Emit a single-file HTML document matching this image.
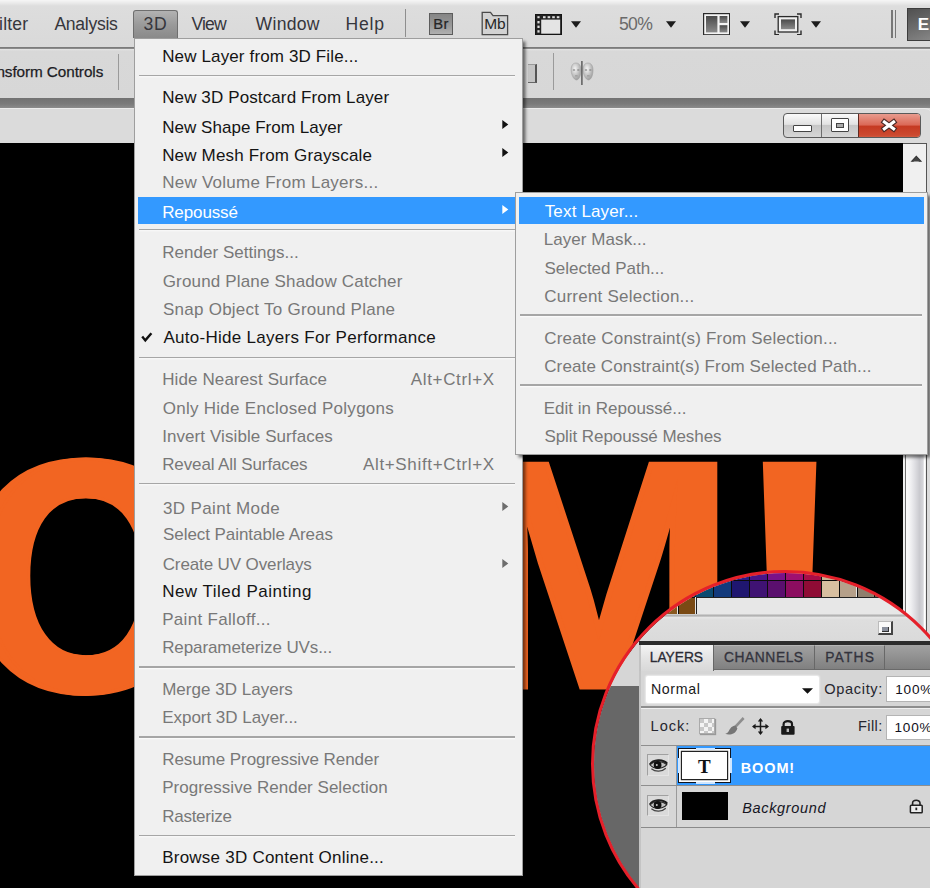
<!DOCTYPE html>
<html><head><meta charset="utf-8"><title>3D menu</title>
<style>
html,body{margin:0;padding:0}
body{width:930px;height:888px;overflow:hidden;position:relative;background:#dedede;font-family:"Liberation Sans",sans-serif}
div,span,svg{position:absolute;box-sizing:border-box}
.t{white-space:nowrap;line-height:1;display:block}
.hr{height:1.35px;background:#a6a6a6;box-shadow:0 1.3px 0 #fafafa}
.a{overflow:visible}
#topbar{left:0;top:0;width:930px;height:47px;background:linear-gradient(#f6f6f6 0,#eaeaea 3px,#dddddd 6px,#d9d9d9 100%)}
#topline{left:0;top:46.6px;width:930px;height:2.4px;background:linear-gradient(#8a8a8a,#6c6c6c 50%,#a8a8a8)}
#optbar{left:0;top:49px;width:930px;height:50px;background:linear-gradient(#e6e6e6 0,#d8d8d8 2px,#d7d7d7 100%)}
#band{left:0;top:98.4px;width:930px;height:10px;background:linear-gradient(#727272,#7b7b7b 60%,#8c8c8c)}
#docwin{left:-20px;top:108px;width:952px;height:800px;background:#dbdbdb;border-radius:0 7px 0 0;border-top:1px solid #ececec}
#canvas{left:0;top:142.5px;width:903px;height:760px;background:#000}
#sbar{left:903px;top:142.5px;width:24px;height:760px;background:#f0f0f0;border-right:1.3px solid #555;border-top:1px solid #555}
#thumb{left:904.6px;top:440px;width:20.6px;height:470px;border-left:1px solid #707070;background:linear-gradient(90deg,#fbfbfb 0,#f0f0f2 25%,#e0e0e4 45%,#c9c9ce 72%,#d6d6da 90%,#ffffff 97%)}
.vsep{width:1.3px;background:#8e8e8e}
#btn3d{left:133px;top:10px;width:44.6px;height:27.5px;border:1px solid #6e6e6e;border-bottom:none;border-radius:3px 3px 0 0;background:linear-gradient(#b2b2b2,#9a9a9a 50%,#8a8a8a)}
.menu{background:#f0f0f0;border:1px solid #9e9e9e;box-shadow:2.5px 2.5px 3px rgba(0,0,0,.55)}
.hl{background:#3399ff}
#boom span{font-weight:bold;color:#f26522;line-height:1;white-space:nowrap;transform-origin:0 0;display:block}
</style></head><body>

<div id="topbar"></div><div id="topline"></div><div id="optbar"></div><div id="band"></div>
<div id="docwin"></div>
<div id="canvas"></div><div id="sbar"></div><div id="thumb"></div>
<svg style="left:910px;top:154.5px" width="13" height="8" viewBox="0 0 13 8"><path d="M0.5 6.8 L6.3 0.6 L12.2 6.8 L9.4 6.8 L6.3 4.8 L3.2 6.8 Z" fill="#333"/><path d="M1.8 6.5 L6.3 1.8 L10.8 6.5 Z" fill="#444"/></svg>

<!-- BOOM artwork (real text glyphs) -->
<div id="boom" style="left:0;top:0;width:903px;height:888px;overflow:hidden">
<svg style="left:0;top:0" width="903" height="888" viewBox="0 0 903 888"><g font-family="Liberation Sans" font-weight="bold" font-size="330" fill="#f26522" stroke="#f26522" stroke-linejoin="miter" stroke-miterlimit="10"><text transform="translate(-39.45,691.16) scale(0.9789,1.0076)" stroke-width="3">O</text><text transform="translate(-23.40,691.16) scale(0.8536,1.0076)" stroke-width="3">O</text><text transform="translate(214.55,691.16) scale(0.9789,1.0076)" stroke-width="3">O</text><text transform="translate(230.60,691.16) scale(0.8536,1.0076)" stroke-width="3">O</text><text transform="translate(460.66,686.81) scale(1.0042,0.9798)" stroke-width="5.5">M</text><text transform="translate(730.19,688.51) scale(1.0847,0.9948)" stroke-width="2">!</text></g></svg>
</div>

<!-- top bar widgets -->
<div id="btn3d"></div>
<div class="vsep" style="left:404.5px;top:9px;height:28px"></div>
<div class="vsep" style="left:118px;top:54px;height:36px;background:#9a9a9a"></div>
<div class="vsep" style="left:553px;top:53px;height:37px;background:#9a9a9a"></div>
<div class="vsep" style="left:891.3px;top:10px;height:28px;background:#777"></div>
<div class="vsep" style="left:895.2px;top:10px;height:28px;background:#777"></div>
<!-- Br -->
<div style="left:429.4px;top:13px;width:23.6px;height:21.6px;border:1px solid #5c5c5c;background:linear-gradient(#858585,#9a9a9a 60%,#b0b0b0)"></div>
<!-- Mb -->
<svg style="left:481px;top:10.5px" width="28" height="25" viewBox="0 0 28 25"><path d="M1.2 23.6 L1.2 1.4 L9.5 1.4 L12 4.6 L26.6 4.6 L26.6 23.6 Z" fill="#d2d2d2" stroke="#4a4a4a" stroke-width="1.3"/></svg>
<!-- film -->
<svg style="left:535px;top:13.5px" width="27" height="21.5" viewBox="0 0 27 21.5"><rect x="0.9" y="0.9" width="25.2" height="19.7" fill="#e4e4e4" stroke="#151515" stroke-width="1.8"/><rect x="1" y="1" width="5.2" height="19.5" fill="#222"/><rect x="1" y="1" width="25" height="4.6" fill="#222"/><g fill="#ddd"><rect x="2.4" y="2.2" width="2.2" height="2"/><rect x="2.4" y="7" width="2.2" height="2.4"/><rect x="2.4" y="11.6" width="2.2" height="2.4"/><rect x="2.4" y="16.2" width="2.2" height="2.4"/><rect x="8" y="2.2" width="2.6" height="2"/><rect x="12.6" y="2.2" width="2.6" height="2"/><rect x="17.2" y="2.2" width="2.6" height="2"/><rect x="21.8" y="2.2" width="2.6" height="2"/></g></svg>
<!-- arrange -->
<svg style="left:703.3px;top:12.8px" width="27.2" height="22.4" viewBox="0 0 27.2 22.4"><defs><linearGradient id="g1" x1="0" y1="0" x2="0" y2="1"><stop offset="0" stop-color="#4a4a4a"/><stop offset="1" stop-color="#8a8a8a"/></linearGradient></defs><rect x="0.6" y="0.6" width="26" height="21.2" fill="#f4f4f4" stroke="#2a2a2a" stroke-width="1.2"/><rect x="3" y="3" width="11.4" height="16.4" fill="url(#g1)"/><rect x="16.6" y="3" width="7.8" height="7" fill="url(#g1)"/><rect x="16.6" y="12.2" width="7.8" height="7.2" fill="url(#g1)"/></svg>
<!-- screen mode -->
<svg style="left:774.4px;top:12.8px" width="28" height="22.6" viewBox="0 0 28 22.6"><path d="M1 5 V1 H5 M23 1 H27 V5 M27 17.6 V21.6 H23 M5 21.6 H1 V17.6" fill="none" stroke="#2a2a2a" stroke-width="1.4"/><rect x="4.2" y="3.6" width="19.6" height="15.4" fill="#f0f0f0" stroke="#2a2a2a" stroke-width="1.3"/><rect x="7" y="6.4" width="14" height="9.8" fill="url(#g1)"/></svg>
<svg class="a" style="left:571.3px;top:21px" width="10" height="7" viewBox="0 0 10 7"><path d="M0 0.3 L10 0.3 L5 6.8 Z" fill="#1c1c1c"/></svg><svg class="a" style="left:665.8px;top:21px" width="10" height="7" viewBox="0 0 10 7"><path d="M0 0.3 L10 0.3 L5 6.8 Z" fill="#1c1c1c"/></svg><svg class="a" style="left:739.5px;top:21px" width="10" height="7" viewBox="0 0 10 7"><path d="M0 0.3 L10 0.3 L5 6.8 Z" fill="#1c1c1c"/></svg><svg class="a" style="left:811.3px;top:21px" width="10" height="7" viewBox="0 0 10 7"><path d="M0 0.3 L10 0.3 L5 6.8 Z" fill="#1c1c1c"/></svg>
<!-- E button -->
<div style="left:906.5px;top:7.5px;width:40px;height:33.5px;border:1.3px solid #3c3c3c;background:linear-gradient(160deg,#505050,#6e6e6e 50%,#8e8e8e)"></div>
<!-- options bar small icon + faces -->
<div style="left:527.5px;top:64px;width:9.5px;height:18.5px;background:#c4c4c4;border-right:2px solid #555;border-bottom:1.5px solid #666;border-top:1px solid #999"></div>
<svg style="left:570px;top:60px" width="26" height="26" viewBox="0 0 26 26"><defs><radialGradient id="fg" cx="0.4" cy="0.35" r="0.7"><stop offset="0" stop-color="#f4f4f4"/><stop offset="1" stop-color="#9a9a9a"/></radialGradient></defs><path d="M6 3 C2 3 0.8 7 1.2 11 C1.6 15 3.5 19.5 6.5 20 C9.5 19.5 10.8 15 11 11 C11.2 7 10 3 6 3Z" fill="url(#fg)" stroke="#a2a2a2" stroke-width="0.6"/><path d="M18 3 C14 3 12.8 7 13.2 11 C13.6 15 15.5 19.5 18.5 20 C21.5 19.5 22.8 15 23 11 C23.2 7 22 3 18 3Z" fill="url(#fg)" stroke="#a2a2a2" stroke-width="0.6"/><g fill="#8a8a8a"><ellipse cx="4" cy="10" rx="1.3" ry="0.8"/><ellipse cx="8.3" cy="10" rx="1.3" ry="0.8"/><ellipse cx="16" cy="10" rx="1.3" ry="0.8"/><ellipse cx="20.3" cy="10" rx="1.3" ry="0.8"/><rect x="5" y="15.5" width="2.6" height="0.8"/><rect x="17" y="15.5" width="2.6" height="0.8"/></g><rect x="11.2" y="1" width="1.4" height="24" fill="#555"/></svg>

<!-- window buttons -->
<div style="left:783px;top:112.5px;width:138px;height:25.5px;border-radius:4px;border:1px solid #5a5a5a;background:linear-gradient(#fafafa,#e2e2e2 45%,#c6c6c6 50%,#d6d6d6);overflow:hidden">
 <div style="left:36.5px;top:0;width:1.2px;height:26px;background:#6e6e6e"></div>
 <div style="left:73.5px;top:-1px;width:64px;height:26px;border-left:1.2px solid #5e2a22;background:linear-gradient(#e9a093 0,#db6a58 45%,#c53a22 52%,#cc4a30 85%,#d86a50)"></div>
 <div style="left:9px;top:11px;width:18.5px;height:7px;background:#fff;border:1.2px solid #444;border-radius:1px"></div>
 <div style="left:46.5px;top:4.6px;width:18px;height:14.4px;background:#fff;border:1.2px solid #444;border-radius:1px"></div>
 <div style="left:51.5px;top:9.4px;width:8px;height:4.8px;background:#aaa;border:1.1px solid #444"></div>
 <svg style="left:95.5px;top:4px" width="19" height="16" viewBox="0 0 19 16"><path d="M4.4 4 L13.6 10.8 M13.6 4 L4.4 10.8" stroke="#4a2a26" stroke-width="5.4" stroke-linecap="square"/><path d="M4.4 4 L13.6 10.8 M13.6 4 L4.4 10.8" stroke="#fff" stroke-width="3.2" stroke-linecap="square"/></svg>
</div>

<span class="t" style="left:54.4px;top:16.30px;font-size:17.6px;color:#36363c;letter-spacing:-0.295px;">Analysis</span>
<span class="t" style="left:143.45px;top:16.30px;font-size:17.6px;color:#36363c;letter-spacing:0.67px;">3D</span>
<span class="t" style="left:191.4px;top:16.30px;font-size:17.6px;color:#36363c;letter-spacing:-0.81px;">View</span>
<span class="t" style="left:255.6px;top:16.30px;font-size:17.6px;color:#36363c;letter-spacing:0.262px;">Window</span>
<span class="t" style="left:345.62px;top:16.30px;font-size:17.6px;color:#36363c;letter-spacing:0.735px;">Help</span>
<span class="t" style="left:-11.88px;top:16.30px;font-size:17.6px;color:#36363c;letter-spacing:0.173px;">Filter</span>
<span class="t" style="left:618.95px;top:16.10px;font-size:17.6px;color:#6a6a6a;letter-spacing:-0.62px;">50%</span>
<span class="t" style="left:-25.74px;top:64.05px;font-size:15.3px;color:#1c1c24;letter-spacing:-0.078px;-webkit-text-stroke:0.25px #1c1c24;">Transform Controls</span>
<span class="t" style="left:917.64px;top:16.41px;font-size:17px;color:#ffffff;letter-spacing:0px;font-weight:bold;">E</span>
<span class="t" style="left:433.14px;top:16.87px;font-size:14.8px;color:#262626;letter-spacing:0.432px;-webkit-text-stroke:0.2px #262626;">Br</span>
<span class="t" style="left:484.29px;top:16.48px;font-size:15.5px;color:#262626;letter-spacing:-0.193px;">Mb</span>

<!-- main menu -->
<div class="menu" style="left:133.5px;top:37.5px;width:389px;height:838px"></div>
<div class="hl" style="left:137.5px;top:197.2px;width:377px;height:27px"></div>
<svg style="left:140px;top:330px" width="14" height="14" viewBox="0 0 14 14"><path d="M2.2 6.6 L5.3 10.4 L11.4 3.2" fill="none" stroke="#111" stroke-width="2.4"/></svg>
<span class="t" style="left:162.17px;top:47.61px;font-size:17.0px;color:#141414;letter-spacing:0.139px;">New Layer from 3D File...</span>
<span class="t" style="left:162.17px;top:89.11px;font-size:17.0px;color:#141414;letter-spacing:0.12px;">New 3D Postcard From Layer</span>
<span class="t" style="left:162.17px;top:119.11px;font-size:17.0px;color:#141414;letter-spacing:0.036px;">New Shape From Layer</span>
<span class="t" style="left:162.17px;top:147.31px;font-size:17.0px;color:#141414;letter-spacing:0.177px;">New Mesh From Grayscale</span>
<span class="t" style="left:162.17px;top:173.91px;font-size:17.0px;color:#787878;letter-spacing:0.264px;">New Volume From Layers...</span>
<span class="t" style="left:162.17px;top:204.11px;font-size:17.0px;color:#ffffff;letter-spacing:-0.105px;">Repoussé</span>
<span class="t" style="left:162.17px;top:244.31px;font-size:17.0px;color:#787878;letter-spacing:0.035px;">Render Settings...</span>
<span class="t" style="left:162.7px;top:272.91px;font-size:17.0px;color:#787878;letter-spacing:0.168px;">Ground Plane Shadow Catcher</span>
<span class="t" style="left:162.97px;top:300.91px;font-size:17.0px;color:#787878;letter-spacing:0.252px;">Snap Object To Ground Plane</span>
<span class="t" style="left:163.5px;top:328.91px;font-size:17.0px;color:#141414;letter-spacing:0.277px;">Auto-Hide Layers For Performance</span>
<span class="t" style="left:162.17px;top:371.31px;font-size:17.0px;color:#787878;letter-spacing:0.121px;">Hide Nearest Surface</span>
<span class="t" style="left:162.7px;top:399.61px;font-size:17.0px;color:#787878;letter-spacing:0.276px;">Only Hide Enclosed Polygons</span>
<span class="t" style="left:162.17px;top:427.91px;font-size:17.0px;color:#787878;letter-spacing:0.084px;">Invert Visible Surfaces</span>
<span class="t" style="left:162.17px;top:456.31px;font-size:17.0px;color:#787878;letter-spacing:-0.11px;">Reveal All Surfaces</span>
<span class="t" style="left:162.97px;top:499.61px;font-size:17.0px;color:#787878;letter-spacing:0.356px;">3D Paint Mode</span>
<span class="t" style="left:162.97px;top:526.31px;font-size:17.0px;color:#787878;letter-spacing:-0.054px;">Select Paintable Areas</span>
<span class="t" style="left:162.7px;top:555.61px;font-size:17.0px;color:#787878;letter-spacing:-0.119px;">Create UV Overlays</span>
<span class="t" style="left:162.17px;top:582.91px;font-size:17.0px;color:#141414;letter-spacing:0.493px;">New Tiled Painting</span>
<span class="t" style="left:162.17px;top:610.91px;font-size:17.0px;color:#787878;letter-spacing:0.316px;">Paint Falloff...</span>
<span class="t" style="left:162.17px;top:639.31px;font-size:17.0px;color:#787878;letter-spacing:-0.094px;">Reparameterize UVs...</span>
<span class="t" style="left:162.17px;top:680.91px;font-size:17.0px;color:#787878;letter-spacing:0.019px;">Merge 3D Layers</span>
<span class="t" style="left:162.17px;top:709.31px;font-size:17.0px;color:#787878;letter-spacing:-0.024px;">Export 3D Layer...</span>
<span class="t" style="left:162.17px;top:750.91px;font-size:17.0px;color:#787878;letter-spacing:-0.056px;">Resume Progressive Render</span>
<span class="t" style="left:162.17px;top:779.31px;font-size:17.0px;color:#787878;letter-spacing:0.022px;">Progressive Render Selection</span>
<span class="t" style="left:162.17px;top:807.61px;font-size:17.0px;color:#787878;letter-spacing:-0.248px;">Rasterize</span>
<span class="t" style="left:162.17px;top:849.31px;font-size:17.0px;color:#141414;letter-spacing:0.239px;">Browse 3D Content Online...</span>
<span class="t" style="left:410.7px;top:371.31px;font-size:17.0px;color:#787878;letter-spacing:0.668px;">Alt+Ctrl+X</span>
<span class="t" style="left:363.0px;top:456.31px;font-size:17.0px;color:#787878;letter-spacing:0.651px;">Alt+Shift+Ctrl+X</span>
<div class="hr" style="left:138.5px;width:376.0px;top:74.8px"></div>
<div class="hr" style="left:138.5px;width:376.0px;top:229.0px"></div>
<div class="hr" style="left:138.5px;width:376.0px;top:356.6px"></div>
<div class="hr" style="left:138.5px;width:376.0px;top:482.6px"></div>
<div class="hr" style="left:138.5px;width:376.0px;top:666.3px"></div>
<div class="hr" style="left:138.5px;width:376.0px;top:736.3px"></div>
<div class="hr" style="left:138.5px;width:376.0px;top:834.6px"></div>
<svg class="a" style="left:502.3px;top:119.7px" width="7" height="9" viewBox="0 0 7 9"><path d="M0.3 0 L6.3 4.5 L0.3 9 Z" fill="#111"/></svg><svg class="a" style="left:502.3px;top:148.0px" width="7" height="9" viewBox="0 0 7 9"><path d="M0.3 0 L6.3 4.5 L0.3 9 Z" fill="#111"/></svg><svg class="a" style="left:502.3px;top:204.8px" width="7" height="9" viewBox="0 0 7 9"><path d="M0.3 0 L6.3 4.5 L0.3 9 Z" fill="#fff"/></svg><svg class="a" style="left:502.3px;top:502.3px" width="7" height="9" viewBox="0 0 7 9"><path d="M0.3 0 L6.3 4.5 L0.3 9 Z" fill="#6d6d6d"/></svg><svg class="a" style="left:502.3px;top:558.5px" width="7" height="9" viewBox="0 0 7 9"><path d="M0.3 0 L6.3 4.5 L0.3 9 Z" fill="#6d6d6d"/></svg>

<!-- submenu -->
<div class="menu" style="left:514.7px;top:192.3px;width:413.2px;height:262.3px"></div>
<div class="hl" style="left:518.6px;top:196.6px;width:405.4px;height:27.2px"></div>
<span class="t" style="left:544.73px;top:202.91px;font-size:17.0px;color:#ffffff;letter-spacing:0.154px;">Text Layer...</span>
<span class="t" style="left:543.67px;top:231.31px;font-size:17.0px;color:#787878;letter-spacing:0.069px;">Layer Mask...</span>
<span class="t" style="left:544.47px;top:259.61px;font-size:17.0px;color:#787878;letter-spacing:-0.017px;">Selected Path...</span>
<span class="t" style="left:544.2px;top:287.91px;font-size:17.0px;color:#787878;letter-spacing:0.238px;">Current Selection...</span>
<span class="t" style="left:544.2px;top:329.61px;font-size:17.0px;color:#787878;letter-spacing:0.191px;">Create Constraint(s) From Selection...</span>
<span class="t" style="left:544.2px;top:357.91px;font-size:17.0px;color:#787878;letter-spacing:0.126px;">Create Constraint(s) From Selected Path...</span>
<span class="t" style="left:543.67px;top:399.91px;font-size:17.0px;color:#787878;letter-spacing:0.01px;">Edit in Repoussé...</span>
<span class="t" style="left:544.47px;top:427.91px;font-size:17.0px;color:#787878;letter-spacing:-0.076px;">Split Repoussé Meshes</span>
<div class="hr" style="left:520px;width:402px;top:314.3px"></div>
<div class="hr" style="left:520px;width:402px;top:384.3px"></div>

<div id="circ" style="left:593.70px;top:572.80px;width:383.00px;height:383.00px;border-radius:50%;overflow:hidden;background:#d6d6d6">
<div style="left:-593.70px;top:-572.80px;width:1000px;height:1000px">
<div style="left:580px;top:540px;width:380.00px;height:74.50px;background:#e6e6e6"></div>
<div style="left:623.8px;top:562.2px;width:17.90px;height:17.80px;background:#0a5a50;border-left:1.3px solid #0c0c0c;border-top:1.3px solid #0c0c0c"></div>
<div style="left:641.7px;top:562.2px;width:17.90px;height:17.80px;background:#0a5570;border-left:1.3px solid #0c0c0c;border-top:1.3px solid #0c0c0c"></div>
<div style="left:659.6px;top:562.2px;width:17.90px;height:17.80px;background:#103f88;border-left:1.3px solid #0c0c0c;border-top:1.3px solid #0c0c0c"></div>
<div style="left:677.5px;top:562.2px;width:17.90px;height:17.80px;background:#16308c;border-left:1.3px solid #0c0c0c;border-top:1.3px solid #0c0c0c"></div>
<div style="left:695.4px;top:562.2px;width:17.90px;height:17.80px;background:#1a2488;border-left:1.3px solid #0c0c0c;border-top:1.3px solid #0c0c0c"></div>
<div style="left:713.3px;top:562.2px;width:17.90px;height:17.80px;background:#20188a;border-left:1.3px solid #0c0c0c;border-top:1.3px solid #0c0c0c"></div>
<div style="left:731.2px;top:562.2px;width:17.90px;height:17.80px;background:#2a1a86;border-left:1.3px solid #0c0c0c;border-top:1.3px solid #0c0c0c"></div>
<div style="left:749.1px;top:562.2px;width:17.90px;height:17.80px;background:#4a1588;border-left:1.3px solid #0c0c0c;border-top:1.3px solid #0c0c0c"></div>
<div style="left:767.0px;top:562.2px;width:17.90px;height:17.80px;background:#7a1288;border-left:1.3px solid #0c0c0c;border-top:1.3px solid #0c0c0c"></div>
<div style="left:784.9px;top:562.2px;width:17.90px;height:17.80px;background:#a01070;border-left:1.3px solid #0c0c0c;border-top:1.3px solid #0c0c0c"></div>
<div style="left:802.8px;top:562.2px;width:17.90px;height:17.80px;background:#a80e48;border-left:1.3px solid #0c0c0c;border-top:1.3px solid #0c0c0c"></div>
<div style="left:820.7px;top:562.2px;width:17.90px;height:17.80px;background:#c8b090;border-left:1.3px solid #0c0c0c;border-top:1.3px solid #0c0c0c"></div>
<div style="left:838.6px;top:562.2px;width:17.90px;height:17.80px;background:#a89680;border-left:1.3px solid #0c0c0c;border-top:1.3px solid #0c0c0c"></div>
<div style="left:856.5px;top:562.2px;width:17.90px;height:17.80px;background:#857565;border-left:1.3px solid #0c0c0c;border-top:1.3px solid #0c0c0c"></div>
<div style="left:874.4px;top:562.2px;width:17.90px;height:17.80px;background:#6a5c4e;border-left:1.3px solid #0c0c0c;border-top:1.3px solid #0c0c0c"></div>
<div style="left:892.3px;top:562.2px;width:17.90px;height:17.80px;background:#55483c;border-left:1.3px solid #0c0c0c;border-top:1.3px solid #0c0c0c"></div>
<div style="left:910.2px;top:562.2px;width:17.90px;height:17.80px;background:#3c332a;border-left:1.3px solid #0c0c0c;border-top:1.3px solid #0c0c0c"></div>
<div style="left:659.6px;top:580px;width:17.90px;height:17.20px;background:#0d5a4a;border-left:1.3px solid #0c0c0c;border-top:1.3px solid #0c0c0c"></div>
<div style="left:677.5px;top:580px;width:17.90px;height:17.20px;background:#0b5060;border-left:1.3px solid #0c0c0c;border-top:1.3px solid #0c0c0c"></div>
<div style="left:695.4px;top:580px;width:17.90px;height:17.20px;background:#0c4a70;border-left:1.3px solid #0c0c0c;border-top:1.3px solid #0c0c0c"></div>
<div style="left:713.3px;top:580px;width:17.90px;height:17.20px;background:#123a7c;border-left:1.3px solid #0c0c0c;border-top:1.3px solid #0c0c0c"></div>
<div style="left:731.2px;top:580px;width:17.90px;height:17.20px;background:#1f1670;border-left:1.3px solid #0c0c0c;border-top:1.3px solid #0c0c0c"></div>
<div style="left:749.1px;top:580px;width:17.90px;height:17.20px;background:#3f1273;border-left:1.3px solid #0c0c0c;border-top:1.3px solid #0c0c0c"></div>
<div style="left:767.0px;top:580px;width:17.90px;height:17.20px;background:#5a0f6e;border-left:1.3px solid #0c0c0c;border-top:1.3px solid #0c0c0c"></div>
<div style="left:784.9px;top:580px;width:17.90px;height:17.20px;background:#8c0d60;border-left:1.3px solid #0c0c0c;border-top:1.3px solid #0c0c0c"></div>
<div style="left:802.8px;top:580px;width:17.90px;height:17.20px;background:#8f0c35;border-left:1.3px solid #0c0c0c;border-top:1.3px solid #0c0c0c"></div>
<div style="left:820.7px;top:580px;width:17.90px;height:17.20px;background:#d8bfa0;border-left:1.3px solid #0c0c0c;border-top:1.3px solid #0c0c0c"></div>
<div style="left:838.6px;top:580px;width:17.90px;height:17.20px;background:#b5a08a;border-left:1.3px solid #0c0c0c;border-top:1.3px solid #0c0c0c"></div>
<div style="left:856.5px;top:580px;width:17.90px;height:17.20px;background:#8f7f6d;border-left:1.3px solid #0c0c0c;border-top:1.3px solid #0c0c0c"></div>
<div style="left:874.4px;top:580px;width:17.90px;height:17.20px;background:#6e6152;border-left:1.3px solid #0c0c0c;border-top:1.3px solid #0c0c0c"></div>
<div style="left:892.3px;top:580px;width:17.90px;height:17.20px;background:#554a3e;border-left:1.3px solid #0c0c0c;border-top:1.3px solid #0c0c0c"></div>
<div style="left:910.2px;top:580px;width:17.90px;height:17.20px;background:#3e362c;border-left:1.3px solid #0c0c0c;border-top:1.3px solid #0c0c0c"></div>
<div style="left:623.8px;top:597.2px;width:17.90px;height:17.00px;background:#a87838;border-left:1.3px solid #0c0c0c;border-top:1.3px solid #0c0c0c"></div>
<div style="left:641.7px;top:597.2px;width:17.90px;height:17.00px;background:#96682a;border-left:1.3px solid #0c0c0c;border-top:1.3px solid #0c0c0c"></div>
<div style="left:659.6px;top:597.2px;width:17.90px;height:17.00px;background:#8a5a20;border-left:1.3px solid #0c0c0c;border-top:1.3px solid #0c0c0c"></div>
<div style="left:677.5px;top:597.2px;width:17.90px;height:17.00px;background:#7a4a14;border-left:1.3px solid #0c0c0c;border-top:1.3px solid #0c0c0c"></div>
<div style="left:695.6px;top:597.2px;width:264.40px;height:17.00px;background:#e7e7e7;border-top:1.3px solid #222;border-left:1.3px solid #222"></div>
<div style="left:580px;top:614.2px;width:380.00px;height:27.30px;background:linear-gradient(#e2e2e2 0,#b4b4b4 1px,#b0b0b0 2.2px,#e6e6e6 3px,#dedede 6px,#dadada 100%)"></div>
<div style="left:878px;top:621px;width:14.50px;height:13.50px;background:#fafafa;border:1px solid #bbb;border-right:2px solid #444;border-bottom:2px solid #444"></div>
<div style="left:882px;top:626.5px;width:6.50px;height:5.00px;background:#8a8f9c;border-right:1.5px solid #333;border-bottom:1.5px solid #333"></div>
<div style="left:580px;top:641px;width:58.60px;height:45.00px;background:#d6d6d6"></div>
<div style="left:580px;top:686px;width:58.60px;height:274.00px;background:#676767"></div>
<div style="left:638.6px;top:641.3px;width:321.40px;height:4.00px;background:#2c2c2c"></div>
<div style="left:638.6px;top:645.3px;width:321.40px;height:24.30px;background:linear-gradient(#a2a2a2,#8d8d8d 60%,#808080);border-bottom:1.2px solid #6a6a6a"></div>
<div style="left:638.6px;top:645.3px;width:75.40px;height:25.70px;background:linear-gradient(#f4f4f4,#e4e4e4 50%,#d8d8d8);border-right:1.3px solid #666;border-left:2px solid #c2c2c2"></div>
<div style="left:714px;top:645.3px;width:101.00px;height:24.30px;border-right:1.3px solid #686868;border-top:1px solid #b4b4b4"></div>
<div style="left:815px;top:645.3px;width:70.00px;height:24.30px;border-right:1.3px solid #686868;border-top:1px solid #b4b4b4"></div>
<div style="left:638.6px;top:670.8px;width:321.40px;height:289.20px;background:#d6d6d6;border-left:2.4px solid #c4c4c4"></div>
<div style="left:646px;top:676px;width:172.80px;height:26.60px;background:#fff;border-radius:2px;box-shadow:0 0 1.5px 1px #ececec"></div>
<svg style="left:801.5px;top:688.3px" width="11" height="6" viewBox="0 0 11 6"><path d="M0 0.2 L11 0.2 L5.5 5.8 Z" fill="#111"/></svg>
<div style="left:886px;top:675.6px;width:74.00px;height:26.00px;background:#fff;border:1.2px solid #b4b4b4"></div>
<div style="left:641px;top:706.2px;width:319.00px;height:1.40px;background:#8e8e8e"></div>
<div style="left:641px;top:707.6px;width:319.00px;height:1.20px;background:#efefef"></div>
<div style="left:699px;top:718px;width:16.00px;height:16.00px;background:conic-gradient(#f4f4f4 25%,#c8c8c8 0 50%,#f4f4f4 0 75%,#c8c8c8 0) 0 0/8px 8px;border:1.3px solid #aaa;box-shadow:1px 1px 1px #999"></div>
<svg style="left:724px;top:716px" width="22" height="20" viewBox="0 0 22 20"><path d="M19.6 2 L10.6 11.6" stroke="#8e8e8e" stroke-width="2.6" fill="none"/><path d="M11.6 9.8 C8 9.6 6.2 12.2 4.8 15 C3.8 16.8 2.4 17.6 1.2 17.8 C5 19.4 11.4 18.6 13.4 12.4 Z" fill="#767676"/></svg>
<svg style="left:752.3px;top:717.6px" width="17" height="17" viewBox="0 0 17 17"><path d="M8.5 1.5 V15.5 M1.5 8.5 H15.5" stroke="#1a1a1a" stroke-width="1.5" fill="none"/><path d="M8.5 0 L11.2 3.6 H5.8 Z M8.5 17 L11.2 13.4 H5.8 Z M0 8.5 L3.6 5.8 V11.2 Z M17 8.5 L13.4 5.8 V11.2 Z" fill="#1a1a1a"/></svg>
<svg style="left:780px;top:718.5px" width="16" height="17" viewBox="0 0 16 17"><path d="M3.6 8 V5.2 C3.6 1.2 12 1.2 12 5.2 V8" fill="none" stroke="#1a1a1a" stroke-width="2.2"/><rect x="1.2" y="7" width="13.4" height="8.8" rx="1" fill="#1a1a1a"/><rect x="6.6" y="9.6" width="2.4" height="3.4" fill="#bbb"/></svg>
<div style="left:886px;top:714.8px;width:74.00px;height:25.00px;background:#fff;border:1.2px solid #b4b4b4"></div>
<div style="left:641px;top:744.6px;width:319.00px;height:1.20px;background:#8e8e8e"></div>
<div style="left:676.5px;top:745.8px;width:283.50px;height:39.20px;background:#3399ff"></div>
<div style="left:675.6px;top:745.8px;width:1.20px;height:81.20px;background:#9a9a9a"></div>
<div style="left:641px;top:785px;width:319.00px;height:1.20px;background:#8e8e8e"></div>
<div style="left:641px;top:826.8px;width:319.00px;height:1.40px;background:#8a8a8a"></div>
<div style="left:647px;top:754.2px;width:22.30px;height:21.60px;background:#dadada;border:1.2px solid #a0a0a0;border-right-color:#e4e4e4;border-bottom-color:#e4e4e4"></div>
<svg style="left:648.8px;top:757.6px" width="19" height="15" viewBox="0 0 19 15"><path d="M0.8 6.6 C4 1.2 14 0.8 18.2 5.6" fill="none" stroke="#1c1c1c" stroke-width="2.1"/><path d="M1.2 7 C4.5 3 13.5 2.6 17.8 6.6 C13.5 11.4 5 11.6 1.2 7Z" fill="#c4c4c4" stroke="#2a2a2a" stroke-width="1.1"/><circle cx="8.6" cy="7" r="3.9" fill="#101010"/><circle cx="7.8" cy="6.9" r="1" fill="#c8c8c8"/><path d="M2.4 10.8 C6.5 14.2 12.8 14 16.8 10.2" fill="none" stroke="#444" stroke-width="1.2"/></svg>
<div style="left:647px;top:794.5px;width:22.30px;height:21.60px;background:#dadada;border:1.2px solid #a0a0a0;border-right-color:#e4e4e4;border-bottom-color:#e4e4e4"></div>
<svg style="left:648.8px;top:797.9px" width="19" height="15" viewBox="0 0 19 15"><path d="M0.8 6.6 C4 1.2 14 0.8 18.2 5.6" fill="none" stroke="#1c1c1c" stroke-width="2.1"/><path d="M1.2 7 C4.5 3 13.5 2.6 17.8 6.6 C13.5 11.4 5 11.6 1.2 7Z" fill="#c4c4c4" stroke="#2a2a2a" stroke-width="1.1"/><circle cx="8.6" cy="7" r="3.9" fill="#101010"/><circle cx="7.8" cy="6.9" r="1" fill="#c8c8c8"/><path d="M2.4 10.8 C6.5 14.2 12.8 14 16.8 10.2" fill="none" stroke="#444" stroke-width="1.2"/></svg>
<div style="left:678px;top:748px;width:53.30px;height:35.20px;background:#fff;border:1.6px solid #10151f;box-shadow:inset 0 0 0 1.8px #fff, inset 0 0 0 3px #222"></div>
<div style="left:696px;top:747.6px;width:19.40px;height:2.00px;background:#cfe6ff"></div>
<div style="left:696px;top:781.6px;width:19.40px;height:2.00px;background:#cfe6ff"></div>
<div style="left:677.8px;top:758px;width:1.90px;height:15.00px;background:#cfe6ff"></div>
<div style="left:729.7px;top:758px;width:1.90px;height:15.00px;background:#cfe6ff"></div>
<div style="left:681.6px;top:791.8px;width:46.80px;height:28.50px;background:#000"></div>
<svg style="left:908.5px;top:797.8px" width="15" height="16" viewBox="0 0 15 16"><path d="M3.6 7.4 V5 C3.6 1.4 11 1.4 11 5 V7.4" fill="none" stroke="#222" stroke-width="1.6"/><rect x="1.4" y="7.2" width="11.8" height="7.6" rx="0.8" fill="#ececec" stroke="#222" stroke-width="1.5"/><rect x="6.4" y="9.6" width="1.8" height="2.6" fill="#222"/></svg>
<span class="t" style="left:649.72px;top:650.82px;font-size:13.8px;color:#2b2b35;letter-spacing:-0.013px;-webkit-text-stroke:0.3px #2b2b35;">LAYERS</span>
<span class="t" style="left:724.05px;top:650.82px;font-size:13.8px;color:#33333d;letter-spacing:0.556px;-webkit-text-stroke:0.3px #33333d;">CHANNELS</span>
<span class="t" style="left:825.22px;top:650.82px;font-size:13.8px;color:#33333d;letter-spacing:1.177px;-webkit-text-stroke:0.3px #33333d;">PATHS</span>
<span class="t" style="left:650.89px;top:681.68px;font-size:14.2px;color:#1a1a1a;letter-spacing:0.665px;">Normal</span>
<span class="t" style="left:824.32px;top:681.64px;font-size:14.6px;color:#26262e;letter-spacing:0.639px;">Opacity:</span>
<span class="t" style="left:895.15px;top:682.79px;font-size:13.6px;color:#101020;letter-spacing:0.829px;">100%</span>
<span class="t" style="left:650.56px;top:719.34px;font-size:14.6px;color:#26262e;letter-spacing:0.97px;">Lock:</span>
<span class="t" style="left:858.06px;top:718.94px;font-size:14.6px;color:#26262e;letter-spacing:0.391px;">Fill:</span>
<span class="t" style="left:894.45px;top:720.99px;font-size:13.6px;color:#101020;letter-spacing:0.829px;">100%</span>
<span class="t" style="left:740.79px;top:761.03px;font-size:14.5px;color:#ffffff;letter-spacing:0.869px;font-weight:bold;">BOOM!</span>
<span class="t" style="left:742.27px;top:800.73px;font-size:14.5px;color:#15151f;letter-spacing:0.644px;font-style:italic;">Background</span>
<span class="t" style="left:698.0px;top:756.92px;font-size:19px;color:#111;letter-spacing:0px;font-weight:bold;font-family:'Liberation Serif',serif;">T</span>
</div></div>
<div style="left:591.00px;top:570.10px;width:388.40px;height:388.40px;border-radius:50%;border:3.0px solid #e5202a"></div>
</body></html>
